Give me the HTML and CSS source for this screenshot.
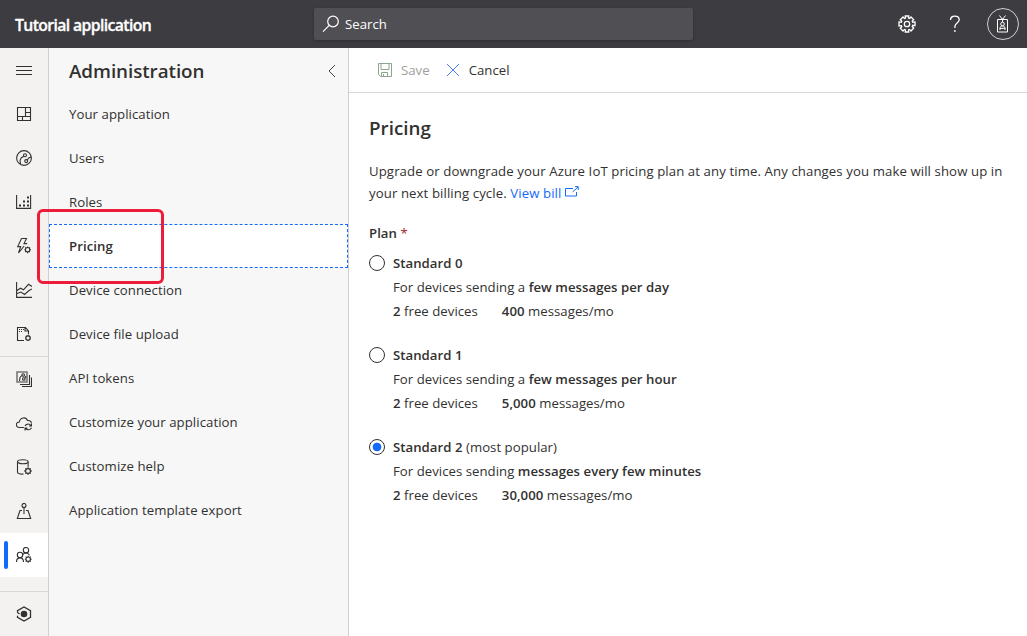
FILE: index.html
```html
<!DOCTYPE html>
<html lang="en">
<head>
<meta charset="utf-8">
<title>Tutorial application</title>
<link rel="stylesheet" href="styles.css">
</head>
<body>
<header class="topbar">
  <div class="brand">Tutorial application</div>
  <div class="search">
    <svg width="18" height="18" viewBox="0 0 18 18"><circle cx="11" cy="6.5" r="5.3"/><path d="M7.2 10.3L1 16.7"/></svg>
    <span>Search</span>
  </div>
  <div class="tools">
    <svg class="gear" width="18" height="18" viewBox="0 0 18 18"><path d="M7.500 3L7.300 1h3.400l-.2 2 1.100.5L13 2l2.700 2.700-1.500 1.400.5 1.100 2.300-.3v3.700l-2.300-.3-.5 1.200 1.500 1.500L13 16l-1.400-1.500-1.100.5.2 2H7.300l.2-2-1.100-.5L5 16l-2.700-2.700 1.500-1.500-.5-1.200-2.300.3V6.900l2.300.3.5-1.100L2.300 4.700 5 2l1.400 1.500z"/><circle cx="9" cy="9" r="2.700"/></svg>
    <svg class="help" width="12" height="18" viewBox="0 0 12 18"><path d="M1.500 5C1.500 2.500 3.300 1.200 5.800 1.200S10.200 2.600 10.200 4.800C10.200 8 5.900 8 5.900 11.500V13"/><path d="M5.900 15v2"/></svg>
    <div class="avatar"><svg width="14" height="18" viewBox="0 0 14 18"><path d="M1.500 4.500h10v12.500h-10zM3.500 .5l3 4 3-4M6.500 3.500v3.500M4 15v-2.200c0-2.300 5-2.300 5 0V15M4 13.300h5"/><circle cx="6.500" cy="9" r="1.800"/></svg></div>
  </div>
</header>
<div class="shell">
  <nav class="rail">
    <a class="cell"><svg viewBox="0 0 16 16"><path d="M0 4.500h16M0 8.500h16M0 12.500h16"/></svg></a>
    <a class="cell"><svg viewBox="0 0 16 16"><path d="M1.500 1.500h13v13h-13zM9.500 1.500v9M1.500 10.500h13M9.500 6.500h5M6.500 10.500v4"/></svg></a>
    <a class="cell"><svg viewBox="0 0 16 16"><circle cx="8" cy="8" r="7.400"/><circle cx="9" cy="5.300" r="1.500"/><circle cx="10.200" cy="11.100" r="1.500"/><path d="M7.800 6.300L5.400 7.700 4 10.300 4.600 14M11.300 10l1.300-2 2.600-1"/></svg></a>
    <a class="cell"><svg viewBox="0 0 16 16"><path d="M.6 1v13.400h14V1"/><path class="dots" d="M3 10.500h2v2H3zM7 10.500h2v2H7zM11 10.500h2v2h-2zM7 6.500h2v2H7zM11 6.500h2v2h-2zM11 2.500h2v2h-2z"/></svg></a>
    <a class="cell"><svg viewBox="0 0 16 16"><path d="M5.500 .5h5L8 5.600h3.200M5.500 .5L1.700 8.600h3L2.500 15 8.200 8"/><circle cx="11.600" cy="11.700" r="2.200"/><path d="M11.600 8.500v1M11.600 14v1.200M8.400 11.700h1M13.800 11.700H15M9.300 9.400l.8.800M13.100 13.200l.8.800M13.900 9.400l-.8.800M10.100 13.200l-.8.800"/></svg></a>
    <a class="cell"><svg viewBox="0 0 16 16"><path d="M.6 0v15.400H16M1 8.500l3.500-2.300 3 1.600 5-5.500L16 4.500M1 11.500l4-1.500 3.500 2.500 4.500-4L16 7"/></svg></a>
    <a class="cell"><svg viewBox="0 0 16 16"><path d="M8 14.500H1.500v-13h8L12.500 5v3.500M9 1.500V5h3.500M3 3.500h1M5 3.500h1M7 3.500h1M3 5.500h1M5 5.500h1"/><circle cx="12" cy="12" r="2.100"/><path d="M12 9v1M12 14v1M9 12h1M14 12h1M9.800 9.800l.7.700M13.500 13.500l.7.700M14.200 9.800l-.7.700M10.500 13.500l-.7.700"/></svg></a>
    <a class="cell cell-split"><svg viewBox="0 0 16 16"><path class="frame" d="M1 1h10v10H1z"/><circle cx="7.200" cy="4" r="1.300"/><circle cx="7.800" cy="8" r="1.300"/><path d="M5.800 4.500L4 6.500 3.500 10M9 7l1-2M13.500 4v9.500H4M15.500 6.500v9H6"/></svg></a>
    <a class="cell"><svg viewBox="0 0 16 16"><path d="M8 12.500H3.500C-.8 12.500-.5 7 3.300 7 4 2.300 10 1.500 11.500 5.500c2-.3 3.700.8 4 3"/><path d="M9 11c1-2.300 4.400-2.600 5.800-.6M15.500 8.700V11H13M15.500 12.800c-1 2.400-4.500 2.700-6 .6M9 15.500v-2.400h2.500"/></svg></a>
    <a class="cell"><svg viewBox="0 0 16 16"><ellipse cx="6.800" cy="2.700" rx="5.300" ry="2"/><path d="M1.500 2.700v10.600c0 1.300 3 2 6 1.700M12.100 2.700v5"/><circle cx="12" cy="12" r="2.400"/><path class="teeth" d="M12 8.300v1.300M12 14.400v1.300M8.300 12h1.300M14.400 12h1.300M9.400 9.400l.9.900M13.700 13.700l.9.900M14.600 9.400l-.9.900M10.300 13.700l-.9.900"/></svg></a>
    <a class="cell"><svg viewBox="0 0 16 16"><circle cx="8" cy="2.500" r="2"/><path d="M8 4.500V11M6 7.500H4L1.300 15.500h13.400L12 7.500h-2"/></svg></a>
    <a class="cell cell-active"><svg viewBox="0 0 16 16"><circle cx="10" cy="3.200" r="2.700"/><circle cx="4" cy="8" r="2.700"/><path d="M.5 15c0-5.500 7-5.500 7 0M6.500 8c1-2.500 5.500-3 7 .2"/><circle cx="12.200" cy="12.200" r="2.200"/><path d="M12.200 8.800V10M12.200 14.400v1.300M8.800 12.200H10M14.400 12.200h1.300M9.700 9.700l.9.900M13.800 13.800l.9.900M14.700 9.700l-.9.900M10.600 13.800l-.9.900"/></svg></a>
    <a class="cell cell-bottom"><svg viewBox="0 0 16 16"><path class="hex" d="M1.500 6.500V4.700L8 1l6.500 3.700v6.600L8 15l-6.500-3.700V9.800M1.500 6.500l2 1.500"/><circle class="core" cx="8" cy="8" r="3.300"/></svg></a>
  </nav>
  <nav class="menu">
    <div class="menu-head"><h2>Administration</h2><svg width="8" height="14" viewBox="0 0 8 14"><path d="M7 1L1 7l6 6"/></svg></div>
    <a class="item">Your application</a>
    <a class="item">Users</a>
    <a class="item">Roles</a>
    <a class="item item-active">Pricing</a>
    <a class="item">Device connection</a>
    <a class="item">Device file upload</a>
    <a class="item">API tokens</a>
    <a class="item">Customize your application</a>
    <a class="item">Customize help</a>
    <a class="item">Application template export</a>
    <div class="callout"></div>
  </nav>
  <main class="main">
    <div class="commands">
      <span class="save"><svg width="16" height="16" viewBox="0 0 16 16"><path d="M1.500 1.500h13v13h-11l-2-2zM4 1.500v6h8v-6M4.500 14.500v-4h6v4M6.500 12v2.500"/></svg>Save</span>
      <span class="cancel"><svg width="14" height="14" viewBox="0 0 14 14"><path d="M1 1l12 12M13 1L1 13"/></svg>Cancel</span>
    </div>
    <section class="content">
      <h1>Pricing</h1>
      <p class="intro">Upgrade or downgrade your Azure IoT pricing plan at any time. Any changes you make will show up in<br>your next billing cycle. <a class="link">View bill<svg width="14" height="12" viewBox="0 0 14 12"><path d="M8 2.500H.5v7.500h11V6M7.500 6L13 1M10 .6h3.200v3.400"/></svg></a></p>
      <div class="label">Plan <i>*</i></div>
      <div class="plan">
        <span class="radio"></span>
        <div><p><b>Standard 0</b></p><p>For devices sending a <b>few messages per day</b></p><p class="quota"><span><b>2</b> free devices</span><span><b>400</b> messages/mo</span></p></div>
      </div>
      <div class="plan">
        <span class="radio"></span>
        <div><p><b>Standard 1</b></p><p>For devices sending a <b>few messages per hour</b></p><p class="quota"><span><b>2</b> free devices</span><span><b>5,000</b> messages/mo</span></p></div>
      </div>
      <div class="plan">
        <span class="radio radio-on"></span>
        <div><p><b>Standard 2</b> (most popular)</p><p>For devices sending <b>messages every few minutes</b></p><p class="quota"><span><b>2</b> free devices</span><span><b>30,000</b> messages/mo</span></p></div>
      </div>
    </section>
  </main>
</div>
</body>
</html>
```
FILE: styles.css
```css
* { box-sizing: border-box; }
body { margin: 0; height: 636px; overflow: hidden; display: flex; flex-direction: column; background: #fff; color: #323130; font: 13.2px/24px "Open Sans", "Noto Sans", sans-serif; letter-spacing: .03px; white-space: nowrap; }
h1, h2, p { margin: 0; }
b { font-weight: 600; }
svg { fill: none; stroke: currentColor; stroke-width: 1; flex: none; }

.topbar { height: 48px; flex: none; display: grid; grid-template-columns: 314px 379px 1fr; align-items: center; background: #3d3c41; color: #fff; }
.brand { padding: 1px 0 0 15px; font-size: 15.8px; font-weight: 600; letter-spacing: -.63px; -webkit-text-stroke: .3px #fff; }
.search { height: 32px; display: flex; align-items: center; gap: 5px; padding-left: 8px; background: #505054; border-radius: 2px; box-shadow: 0 1px 3px #00000040; }
.search svg { stroke-width: 1.2; }
.tools { display: flex; align-items: center; justify-content: flex-end; padding-right: 8px; }
.gear { margin-right: 33px; stroke-width: 1.3; }
.help { margin-right: 26px; stroke-width: 1.3; }
.avatar { width: 32px; height: 32px; display: grid; place-items: center; border: 1px solid #d0d0d2; border-radius: 50%; }

.shell { flex: 1; min-height: 0; display: grid; grid-template-columns: 49px 300px 1fr; }
.rail { display: flex; flex-direction: column; background: #f3f2f1; border-right: 1px solid #d2d0ce; }
.cell { height: 44px; flex: none; display: grid; place-items: center; }
.cell svg { width: 16px; height: 16px; stroke-width: 1.1; }
.cell-split { height: 45px; border-top: 1px solid #d8d6d4; }
.cell-active { position: relative; background: #fff; }
.cell-active::before { content: ""; position: absolute; left: 4px; top: 8px; width: 4px; height: 28px; border-radius: 2px; background: #136bfb; }
.cell-bottom { height: 45px; margin-top: auto; border-top: 1px solid #d8d6d4; }
.dots, .core { fill: currentColor; stroke: none; }
.frame { stroke: #777; stroke-width: 1.6; }
.teeth { stroke-width: 1.3; }
.hex { stroke-width: 1.3; }

.menu { position: relative; background: #f7f7f7; border-right: 1px solid #d2d0ce; }
.menu-head { height: 44px; display: flex; align-items: center; justify-content: space-between; padding: 1px 12px 0 20px; }
.menu-head svg { stroke-width: .9; }
.menu-head h2 { font-size: 18.8px; font-weight: 600; letter-spacing: -.05px; }
.item { height: 44px; display: flex; align-items: center; padding-left: 20px; letter-spacing: .06px; }
.item-active { background: #fff; border: 1px dashed #136bfb; padding-left: 19px; font-weight: 600; }
.callout { position: absolute; left: -12px; top: 161px; width: 127px; height: 75px; border: 3px solid #ed1c3a; border-radius: 6px; }

.main { min-width: 0; }
.commands { height: 45px; display: flex; gap: 16px; align-items: center; padding-left: 28px; border-bottom: 1px solid #d8d8d8; }
.save, .cancel { display: flex; align-items: center; gap: 8px; }
.cancel { gap: 9px; }
.save { color: #a19f9d; }
.save svg { color: #8da58d; }
.cancel svg { color: #4b7dfc; }
.content { padding: 22px 0 0 20px; }
.content h1 { font-size: 18.8px; font-weight: 600; line-height: 26px; }
.intro { margin-top: 19px; line-height: 22px; letter-spacing: .095px; }
.link { color: #136bfb; }
.link svg { margin-left: 4px; vertical-align: 0; }
.label { margin-top: 17px; font-weight: 600; }
.label i { color: #a4262c; font-style: normal; font-weight: 400; }
.plan { display: flex; gap: 8px; margin-bottom: 20px; }
.label + .plan { margin-top: 6px; }
.radio { width: 16px; height: 16px; margin-top: 4px; border: 1px solid #323130; border-radius: 50%; }
.radio-on { background: radial-gradient(circle, #136bfb 4px, transparent 4.7px); }
.quota { display: flex; gap: 24px; }
```
